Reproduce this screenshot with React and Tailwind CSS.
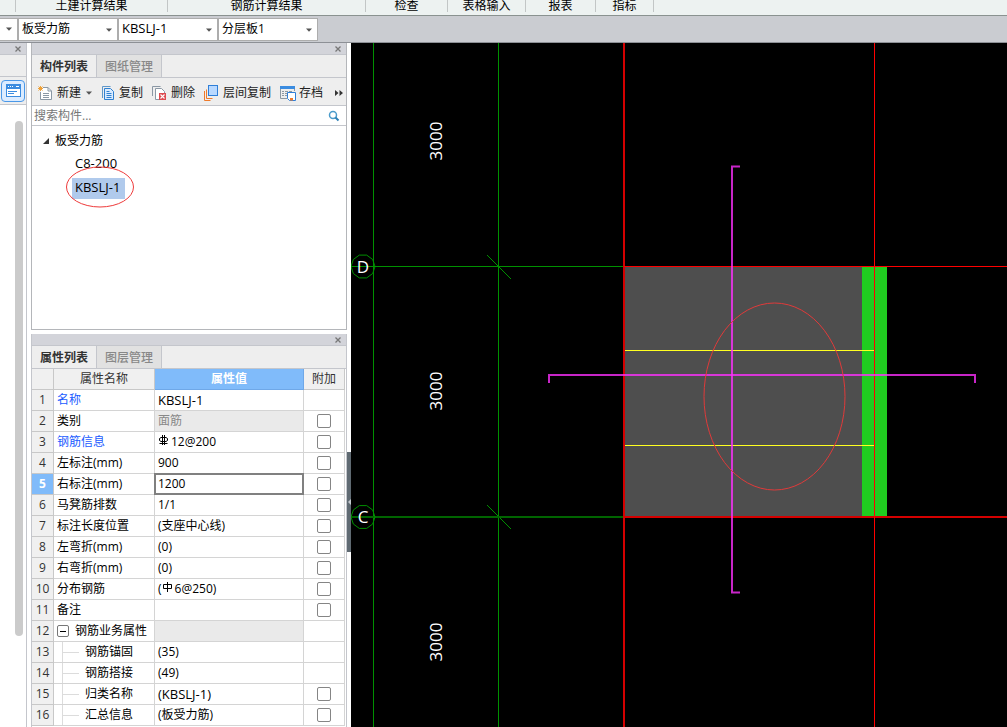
import { useState } from 'react';

const ribbonGroups = [
  { label: '土建计算结果', width: 'w-[152px]' },
  { label: '钢筋计算结果', width: 'w-[198px]' },
  { label: '检查', width: 'w-[82px]' },
  { label: '表格输入', width: 'w-[78px]' },
  { label: '报表', width: 'w-[70px]' },
  { label: '指标', width: 'w-[58px]' },
];

const pickers = [
  { label: '构件类型', value: '板受力筋', size: 'text-xs' },
  { label: '构件', value: 'KBSLJ-1', size: 'text-[13px]' },
  { label: '分层', value: '分层板1', size: 'text-xs' },
];

const properties = [
  { name: '名称', value: 'KBSLJ-1', latin: true, link: true },
  { name: '类别', value: '面筋', readOnly: true, extra: true },
  { name: '钢筋信息', value: '12@200', symbol: 'third', link: true, extra: true },
  { name: '左标注(mm)', value: '900', extra: true },
  { name: '右标注(mm)', value: '1200', editing: true, extra: true },
  { name: '马凳筋排数', value: '1/1', extra: true },
  { name: '标注长度位置', value: '(支座中心线)', extra: true },
  { name: '左弯折(mm)', value: '(0)', extra: true },
  { name: '右弯折(mm)', value: '(0)', extra: true },
  { name: '分布钢筋', value: '6@250)', prefix: '(', symbol: 'first', extra: true },
  { name: '备注', value: '', extra: true },
  { name: '钢筋业务属性', value: '', group: true, readOnly: true },
  { name: '钢筋锚固', value: '(35)', child: true },
  { name: '钢筋搭接', value: '(49)', child: true },
  { name: '归类名称', value: '(KBSLJ-1)', latin: true, child: true, extra: true },
  { name: '汇总信息', value: '(板受力筋)', child: true, extra: true },
];

function Caret({ className = '' }) {
  return (
    <svg width="6" height="4" viewBox="0 0 6 4" className={className} aria-hidden="true">
      <path d="M0 0.5h6L3 3.8z" fill="#555" />
    </svg>
  );
}

function CloseButton() {
  return (
    <button type="button" aria-label="关闭" className="flex h-full w-4 items-center justify-center">
      <svg width="6" height="6" viewBox="0 0 6 6" aria-hidden="true">
        <path d="M0.5 0.5l5 5M5.5 0.5l-5 5" stroke="#777" strokeWidth="1.3" />
      </svg>
    </button>
  );
}

function NewIcon() {
  return (
    <svg width="14" height="16" viewBox="0 0 14 16" fill="none" aria-hidden="true">
      <path d="M5 2.5h5l3.5 3.5v8.5h-11V7" fill="#fff" stroke="#8b98a5" />
      <path d="M10 2.5V6h3.5M5 8.5h6M5 10.5h6M5 12.5h6" stroke="#8b98a5" />
      <path d="M2.5 1v5M0 3.5h5M0.5 1.5l4 4M4.5 1.5l-4 4" stroke="#eda13a" />
    </svg>
  );
}

function CopyIcon() {
  return (
    <svg width="14" height="16" viewBox="0 0 14 16" fill="none" aria-hidden="true">
      <path d="M1.5 13V1.5h8" stroke="#5f97c9" />
      <path d="M3.5 3.5h6l3 3v8h-9z" fill="#d9ebff" stroke="#2f80d0" />
      <path d="M5.5 6.5h3M5.5 8.5h5M5.5 10.5h5M5.5 12.5h5" stroke="#2f80d0" />
    </svg>
  );
}

function DeleteIcon() {
  return (
    <svg width="14" height="16" viewBox="0 0 14 16" fill="none" aria-hidden="true">
      <path d="M0.5 11V1.5h8" stroke="#8b98a5" />
      <path d="M7 14.5H3.5v-11h6l3 3V8" fill="#fff" stroke="#8b98a5" />
      <rect x="7" y="8" width="7" height="7" fill="#dd4a50" />
      <path d="M8.5 9.5l4 4M12.5 9.5l-4 4" stroke="#fff" strokeWidth="1.1" />
    </svg>
  );
}

function LayersIcon() {
  return (
    <svg width="14" height="16" viewBox="0 0 14 16" fill="none" aria-hidden="true">
      <path d="M0.5 6v9.5h6M2.5 4.5v9h6" stroke="#ee7a2b" />
      <rect x="4.5" y="0.5" width="9" height="10" fill="#b9d9ff" stroke="#2f7fd8" />
    </svg>
  );
}

function ArchiveIcon() {
  return (
    <svg width="16" height="16" viewBox="0 0 16 16" fill="none" aria-hidden="true">
      <path d="M0.5 1v12.5H7M14.5 1v5" stroke="#8d98a3" />
      <path d="M0 1h15v3H0z" fill="#3b8ce0" />
      <path d="M2 6.5h2M5 6.5h3M9 6.5h3M2 8.5h2M5 8.5h2M2 10.5h2M5 10.5h2" stroke="#8d98a3" />
      <path d="M7.5 7.5h8v8h-6l-2-2z" fill="#fff" stroke="#2f7fd8" />
      <path d="M10 13h3v2.5h-3z" fill="#ee7a2b" />
    </svg>
  );
}

// Rebar grade marks
function RebarMark({ grade }) {
  return (
    <svg width="11" height="11" viewBox="0 0 11 11" fill="none" stroke="#000" className="mb-1 mr-0.5 shrink-0" aria-hidden="true">
      {grade === 'third' ? (
        <path d="M3 2.5h5l1.5 1v2l-1.5 1H3l-1.5-1v-2zM4.5 0v10M6.5 0v10M1.5 8.5h8" />
      ) : (
        <path d="M1.5 2.5h8v4h-8zM5.5 0v10" />
      )}
    </svg>
  );
}

function PanelTabs({ tabs }) {
  const [active, setActive] = useState(0);
  return (
    <div className="flex h-[23px] shrink-0 border-b border-[#c4c6cc] bg-[#eeeeee]" role="tablist">
      {tabs.map((tab, i) => (
        <button
          key={tab}
          type="button"
          role="tab"
          aria-selected={active === i}
          onClick={() => setActive(i)}
          className={
            active === i
              ? 'w-[65px] border-r border-[#c4c6cc] pt-0.5 text-xs font-semibold text-[#333]'
              : 'w-[65px] border-r border-[#c4c6cc] bg-[#e1e1e1] pt-0.5 text-xs font-medium text-[#888]'
          }
        >
          {tab}
        </button>
      ))}
    </div>
  );
}

function PanelHeader() {
  return (
    <div className="flex h-3 shrink-0 justify-end border-b border-[#c4c6cc] bg-[#d3d4da]">
      <CloseButton />
    </div>
  );
}

function ComponentPanel() {
  return (
    <section className="flex h-[287px] shrink-0 flex-col border-x border-b border-[#b4b6ba]">
      <PanelHeader />
      <PanelTabs tabs={['构件列表', '图纸管理']} />
      <div className="flex h-7 shrink-0 items-center gap-[9px] border-b border-[#c4c6cc] bg-[#eeeeee] pl-1.5 pr-[3px] pt-0.5 text-xs text-[#222]">
        <button type="button" className="flex items-center gap-[5px]">
          <NewIcon />新建<Caret />
        </button>
        <button type="button" className="flex items-center gap-1">
          <CopyIcon />复制
        </button>
        <button type="button" className="flex items-center gap-[5px]">
          <DeleteIcon />删除
        </button>
        <button type="button" className="flex items-center gap-[5px]">
          <LayersIcon />层间复制
        </button>
        <button type="button" className="flex items-center gap-[3px]">
          <ArchiveIcon />存档
        </button>
        <button type="button" aria-label="更多" className="ml-auto">
          <svg width="8" height="6" viewBox="0 0 8 6" aria-hidden="true">
            <path d="M0 0l3.5 3L0 6zM4.5 0L8 3 4.5 6z" fill="#333" />
          </svg>
        </button>
      </div>
      <div className="flex h-5 shrink-0 items-center border-b border-[#c4c6cc] bg-white pr-1.5">
        <input
          type="text"
          aria-label="搜索构件"
          placeholder="搜索构件..."
          className="min-w-0 flex-1 pl-0.5 text-xs outline-none placeholder:text-[#777]"
        />
        <svg width="12" height="12" viewBox="0 0 12 12" fill="none" aria-hidden="true">
          <circle cx="5" cy="5" r="3.5" stroke="#4a9bcb" strokeWidth="1.5" />
          <path d="M7.5 7.5l3 3" stroke="#2b7fb5" strokeWidth="2" />
        </svg>
      </div>
      <ul className="flex-1 bg-white pt-[3px] text-xs text-black">
        <li>
          <div className="flex h-[23px] items-center gap-[5px] pl-[10px]">
            <svg width="8" height="8" viewBox="0 0 8 8" aria-hidden="true">
              <path d="M7 1v6H1z" fill="#333" />
            </svg>
            板受力筋
          </div>
          <ul className="pl-10">
            <li className="flex h-6 items-center pl-[3px] text-[13px]">C8-200</li>
            <li className="relative flex h-6 w-[53px] items-center text-[13px]">
              <span className="flex h-[21px] w-full items-center bg-[#b0caec] pl-[3px]">KBSLJ-1</span>
              <svg width="70" height="42" viewBox="0 0 70 42" className="absolute -left-2 -top-2.5" aria-hidden="true">
                <ellipse cx="36" cy="21" rx="33.5" ry="20" fill="none" stroke="#ee3b3b" />
              </svg>
            </li>
          </ul>
        </li>
      </ul>
    </section>
  );
}

function PropertyName({ item }) {
  if (item.group) {
    return (
      <div className="flex items-center gap-[6px]">
        <button type="button" aria-label="折叠" className="flex size-3 items-center justify-center rounded-xs border border-[#777]">
          <span className="h-px w-1.5 bg-black" />
        </button>
        {item.name}
      </div>
    );
  }
  if (item.child) {
    return (
      <div className="flex h-5 items-center gap-1.5 pl-[5px]">
        <span className="flex h-full w-[17px] items-center border-l border-[#dcdcdc]">
          <span className="h-px w-full bg-[#dcdcdc]" />
        </span>
        {item.name}
      </div>
    );
  }
  return item.name;
}

function PropertyValue({ item }) {
  if (item.editing) {
    return (
      <input
        type="text"
        aria-label={item.name}
        defaultValue={item.value}
        className="absolute -inset-px border-2 border-[#808080] bg-white pl-0.5 outline-none"
      />
    );
  }
  return (
    <div className={item.latin ? 'flex items-center text-[13px]' : 'flex items-center'}>
      {item.prefix}
      {item.symbol && <RebarMark grade={item.symbol} />}
      {item.value}
    </div>
  );
}

function PropertyPanel() {
  return (
    <section className="flex min-h-0 flex-1 flex-col overflow-hidden border-x border-[#c4c6cc]">
      <PanelHeader />
      <PanelTabs tabs={['属性列表', '图层管理']} />
      <div className="shrink-0 bg-white pr-px">
        <table className="w-full table-fixed border-separate border-spacing-0 text-xs text-black">
          <thead>
            <tr className="h-[21px] bg-[#f0f0f0] text-[#333]">
              <th className="w-[22px] border-b border-r border-[#c8c8c8] p-0" aria-label="序号" />
              <th className="w-[101px] border-b border-r border-[#c8c8c8] p-0 font-normal">属性名称</th>
              <th className="border-b border-r border-[#6fa8e8] bg-[#80bbfa] p-0 font-semibold text-white">属性值</th>
              <th className="w-[41px] border-b border-r border-[#c8c8c8] p-0 font-normal">附加</th>
            </tr>
          </thead>
          <tbody>
            {properties.map((item, i) => (
              <tr key={item.name} className="h-[21px]">
                <td
                  className={
                    item.editing
                      ? 'border-b border-r border-[#c8c8c8] bg-[#80bbfa] p-0 text-center font-bold leading-5 text-white'
                      : 'border-b border-r border-[#c8c8c8] bg-[#f0f0f0] p-0 text-center leading-5 text-[#333]'
                  }
                >
                  {i + 1}
                </td>
                <td
                  className={
                    item.link
                      ? 'border-b border-r border-[#d4d4d4] p-0 pl-[3px] leading-5 text-[#1a5cff]'
                      : 'border-b border-r border-[#d4d4d4] p-0 pl-[3px] leading-5'
                  }
                >
                  <PropertyName item={item} />
                </td>
                <td
                  className={
                    item.readOnly
                      ? 'relative border-b border-r border-[#d4d4d4] bg-[#eaeaea] p-0 pl-[3px] leading-5 text-[#888]'
                      : 'relative border-b border-r border-[#d4d4d4] p-0 pl-[3px] leading-5'
                  }
                >
                  <PropertyValue item={item} />
                </td>
                <td className="border-b border-r border-[#d4d4d4] p-0">
                  {item.extra && (
                    <input
                      type="checkbox"
                      aria-label={`附加 ${item.name}`}
                      className="mx-auto block size-3.5 appearance-none rounded-xs border border-[#858585] bg-white checked:bg-[#80bbfa]"
                    />
                  )}
                </td>
              </tr>
            ))}
          </tbody>
        </table>
      </div>
    </section>
  );
}

function AxisBubble({ y, label }) {
  return (
    <g>
      <polygon
        points="12,0 9.7,7 3.7,11.4 -3.7,11.4 -9.7,7 -12,0 -9.7,-7 -3.7,-11.4 3.7,-11.4 9.7,-7"
        transform={`translate(12 ${y})`}
        fill="none"
        stroke="#009000"
      />
      <text x="12" y={y + 6} textAnchor="middle" fontSize="17" fill="#fff">{label}</text>
    </g>
  );
}

function DrawingCanvas() {
  return (
    <main className="min-w-0 flex-1 overflow-hidden bg-black">
      <svg className="block h-full w-full" role="img" aria-label="板受力筋平面图" fill="none">
        <rect x="273" y="224" width="238" height="250" fill="#4e4e4e" />
        <rect x="511" y="224" width="25" height="250" fill="#20cc20" />

        {/* axis grid */}
        <g stroke="#009000">
          <line x1="22.5" y1="0" x2="22.5" y2="100%" />
          <line x1="147.5" y1="0" x2="147.5" y2="100%" />
          <line x1="0" y1="223.5" x2="273" y2="223.5" />
          <line x1="136" y1="212" x2="160" y2="236" />
          <line x1="136" y1="462" x2="160" y2="486" />
        </g>
        <line x1="0" y1="474" x2="273" y2="474" stroke="#006400" strokeWidth="2" />
        <AxisBubble y={223.5} label="D" />
        <AxisBubble y={474} label="C" />

        {/* distribution bars */}
        <path d="M274 307.5h250M274 402.5h250" stroke="#ffff20" />

        {/* beam axes */}
        <line x1="273" y1="0" x2="273" y2="100%" stroke="#d40000" strokeWidth="2" />
        <line x1="273" y1="474" x2="100%" y2="474" stroke="#d40000" strokeWidth="2" />
        <line x1="523.5" y1="0" x2="523.5" y2="100%" stroke="#ff0000" />
        <line x1="273" y1="223.5" x2="100%" y2="223.5" stroke="#ff0000" />

        {/* top reinforcement */}
        <g stroke="#ff30ff" strokeOpacity="0.78" strokeWidth="2">
          <path d="M389 123.5h-8v426h8" />
          <path d="M198 340v-8h426v8" />
        </g>

        <ellipse cx="423.5" cy="353.5" rx="70.5" ry="93.5" stroke="#e03a3a" />

        <g fontSize="17" fill="#fff" textAnchor="middle">
          <text transform="translate(91 98) rotate(-90)">3000</text>
          <text transform="translate(91 348) rotate(-90)">3000</text>
          <text transform="translate(91 599) rotate(-90)">3000</text>
        </g>
      </svg>
    </main>
  );
}

export default function App() {
  return (
    <div className="flex h-screen flex-col overflow-hidden bg-white font-['Open_Sans','Noto_Sans_CJK_SC',sans-serif]">
      <nav className="flex h-4 shrink-0 items-start border-b border-[#8a9290] bg-[#edf2f1] pl-[15px] text-xs text-black">
        {ribbonGroups.map((group) => (
          <div key={group.label} className={`flex h-3 items-center justify-center border-l border-[#c2c6c6] ${group.width}`}>
            <button type="button" className="leading-3">{group.label}</button>
          </div>
        ))}
        <div className="h-3 border-l border-[#c2c6c6]" />
      </nav>

      <div className="flex h-[27px] shrink-0 items-center border-b border-[#8d9096] bg-[#caccd1]">
        <button type="button" aria-label="楼层" className="flex h-[23px] w-[18px] items-center justify-center border-y border-r border-[#adadad] bg-white">
          <Caret />
        </button>
        {pickers.map((picker) => (
          <div key={picker.label} className="relative w-[100px]">
            <select
              aria-label={picker.label}
              className={`block h-[23px] w-full appearance-none border border-[#adadad] bg-white pl-[3px] text-black outline-none ${picker.size}`}
            >
              <option>{picker.value}</option>
            </select>
            <Caret className="pointer-events-none absolute right-[6px] top-[10px]" />
          </div>
        ))}
      </div>

      <div className="flex min-h-0 flex-1">
        <aside className="flex w-[27px] shrink-0 flex-col border-r border-[#c4c6cc] bg-white">
          <PanelHeader />
          <div className="h-[22px] border-b border-[#c4c6cc] bg-[#eeeeee]" />
          <div className="flex h-7 items-center justify-center border-b border-[#c4c6cc] bg-[#eeeeee]">
            <button type="button" aria-label="构件" className="flex h-[22px] w-6 items-center justify-center rounded border border-[#4a98e8] bg-[#dcecff]">
              <svg width="15" height="13" viewBox="0 0 15 13" aria-hidden="true">
                <rect x="0.5" y="0.5" width="14" height="12" fill="#fff" stroke="#3b8ce0" />
                <path d="M0 0h15v5H0z" fill="#3b8ce0" />
                <path d="M2 2.5h1M4 2.5h1M6 2.5h1M10 2.5h3" stroke="#fff" />
                <path d="M2 7.5h9M2 9.5h6" stroke="#3b8ce0" />
              </svg>
            </button>
          </div>
          <div className="flex min-h-0 flex-1 justify-end pr-[3px] pt-4">
            <div className="h-[85%] w-2 rounded-full bg-[#cbcbcb]" />
          </div>
        </aside>

        <div className="flex w-[320px] shrink-0 flex-col gap-1 pl-1">
          <ComponentPanel />
          <PropertyPanel />
        </div>

        <div className="flex w-1 shrink-0 flex-col justify-center">
          <button type="button" aria-label="收起面板" className="mt-[234px] flex h-[100px] items-center justify-center bg-[#5f6a72]">
            <svg width="3" height="6" viewBox="0 0 3 6" aria-hidden="true">
              <path d="M3 0v6L0 3z" fill="#c5cad0" />
            </svg>
          </button>
        </div>

        <DrawingCanvas />
      </div>
    </div>
  );
}
